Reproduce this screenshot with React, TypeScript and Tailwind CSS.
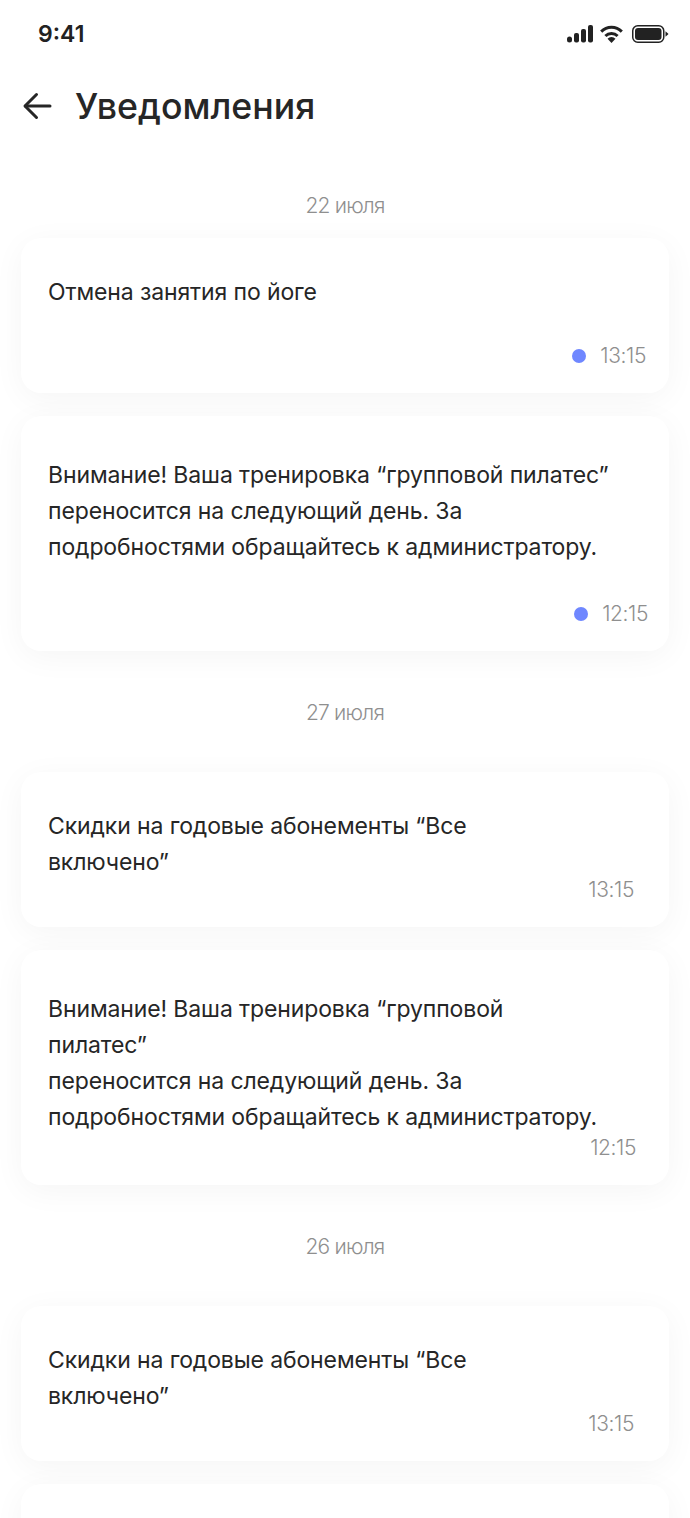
type Note = { text: string[]; time: string; dot?: boolean; pad: string; timeClass: string };

function Card({ note }: { note: Note }) {
  return (
    <div className={`rounded-[20px] bg-white shadow-[0_6px_32px_rgba(0,0,0,0.045)] pl-[27px] pb-[23px] ${note.pad}`}>
      <div className="text-[23px] leading-[36px] tracking-[-0.12px] text-[#262626] whitespace-nowrap">
        {note.text.map((line) => (
          <div key={line}>{line}</div>
        ))}
      </div>
      <div className={`flex items-center justify-end text-[21px] leading-[28px] tracking-[-0.4px] font-light text-[#8f8f8f] ${note.timeClass}`}>
        {note.dot && <span className="w-[14px] h-[14px] rounded-full bg-[#6f87ff] mr-[14px]" />}
        {note.time}
      </div>
    </div>
  );
}

function DateLabel({ label, className }: { label: string; className?: string }) {
  return (
    <div className={`text-center text-[21px] leading-[28px] tracking-[-0.8px] font-light text-[#8f8f8f] ${className ?? ""}`}>
      {label}
    </div>
  );
}

const skidki = ["Скидки на годовые абонементы “Все", "включено”"];

export default function App() {
  return (
    <div className="w-[690px] h-[1518px] overflow-hidden bg-white font-['Inter','Noto_Sans',sans-serif]">
      {/* status bar */}
      <div className="flex items-center justify-between pl-[38px] pr-[21px] pt-[20px] h-[48px]">
        <span className="text-[23px] font-semibold text-[#222]">9:41</span>
        <div className="flex items-center">
          <svg width="26" height="18" viewBox="0 0 26 18" fill="#222">
            <rect x="0" y="11.5" width="5" height="6" rx="2.5" />
            <rect x="7" y="8" width="5" height="9.5" rx="2" />
            <rect x="14" y="4" width="5" height="13.5" rx="2" />
            <rect x="21" y="0" width="5" height="17.5" rx="2" />
          </svg>
          <svg className="ml-[7px]" width="23" height="18" viewBox="0 0 23 18" fill="none" stroke="#222" strokeWidth="3">
            <path d="M1.2 6.6a14.6 14.6 0 0 1 20.6 0" />
            <path d="M5.4 11a8.7 8.7 0 0 1 12.2 0" />
            <path d="M11.5 18l-4-4.2a5.6 5.6 0 0 1 8 0z" fill="#222" stroke="none" />
          </svg>
          <svg className="ml-[9px]" width="37" height="18" viewBox="0 0 37 18" fill="none">
            <rect x="0.75" y="0.75" width="31" height="16.5" rx="5" stroke="#222" strokeWidth="1.5" />
            <rect x="3" y="3" width="26.5" height="12" rx="3" fill="#222" />
            <path d="M33.5 6.2L36.5 9l-3 2.8z" fill="#222" />
          </svg>
        </div>
      </div>

      {/* header */}
      <div className="flex items-center pl-[20px] pt-[32px]">
        <svg width="36" height="36" viewBox="0 0 36 36" fill="none" stroke="#262626" strokeWidth="3" strokeLinecap="round" strokeLinejoin="round">
          <path d="M30 18H5.5" />
          <path d="M16.5 6.5L5 18l11.5 11.5" />
        </svg>
        <h1 className="ml-[19px] text-[35.7px] leading-[52px] font-medium text-[#262626]">Уведомления</h1>
      </div>

      <div className="px-[21px] pt-[60px]">
        <DateLabel label="22 июля" />
        <div className="mt-[18px] flex flex-col gap-[23px]">
          <Card note={{ text: ["Отмена занятия по йоге"], time: "13:15", dot: true, pad: "pt-[36px]", timeClass: "mt-[32px] pr-[23px]" }} />
          <Card note={{ text: ["Внимание! Ваша тренировка “групповой пилатес”", "переносится на следующий день. За", "подробностями обращайтесь к администратору."], time: "12:15", dot: true, pad: "pt-[41px]", timeClass: "mt-[35px] pr-[21px]" }} />
        </div>

        <DateLabel label="27 июля" className="mt-[48px]" />
        <div className="mt-[45px] flex flex-col gap-[23px]">
          <Card note={{ text: skidki, time: "13:15", pad: "pt-[36px]", timeClass: "mt-[-4px] pr-[35px]" }} />
          <Card note={{ text: ["Внимание! Ваша тренировка “групповой", "пилатес”", "переносится на следующий день. За", "подробностями обращайтесь к администратору."], time: "12:15", pad: "pt-[41px]", timeClass: "mt-[-1px] pr-[33px]" }} />
        </div>

        <DateLabel label="26 июля" className="mt-[48px]" />
        <div className="mt-[45px] flex flex-col gap-[23px]">
          <Card note={{ text: skidki, time: "13:15", pad: "pt-[36px]", timeClass: "mt-[-4px] pr-[35px]" }} />
          <div className="h-[100px] rounded-[20px] bg-white shadow-[0_6px_32px_rgba(0,0,0,0.045)]" />
        </div>
      </div>
    </div>
  );
}
